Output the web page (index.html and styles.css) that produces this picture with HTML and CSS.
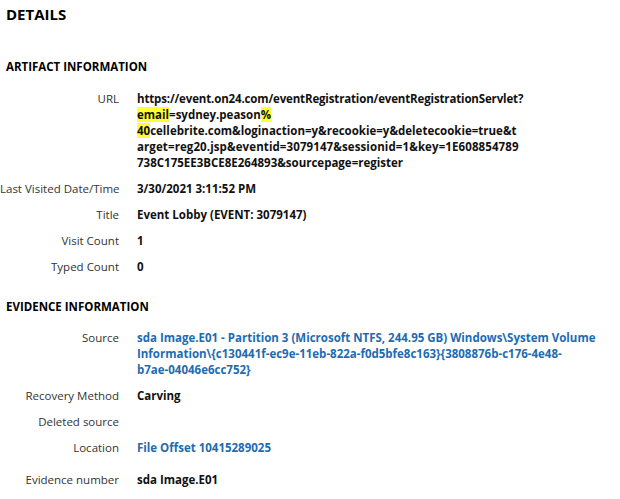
FILE: index.html
```html
<!DOCTYPE html>
<html>
<head>
<meta charset="utf-8">
<link rel="stylesheet" href="styles.css">
</head>
<body>
<div class="page">
  <h1 class="title">DETAILS</h1>
  <h2 class="section">ARTIFACT INFORMATION</h2>
  <div class="rows">
    <div class="row"><div class="label">URL</div><div class="value"><span class="tight">https://event.on24.com/eventRegistration/eventRegistrationServlet?</span><br><span class="hl">email</span>=sydney.peason<span class="hl">%</span><br><span class="hl">40</span>cellebrite.com&amp;loginaction=y&amp;recookie=y&amp;deletecookie=true&amp;t<br><span class="wide">arget=reg20.jsp&amp;eventid=3079147&amp;sessionid=1&amp;key=1E608854789</span><br>738C175EE3BCE8E264893&amp;sourcepage=register</div></div>
    <div class="row"><div class="label">Last Visited Date/Time</div><div class="value">3/30/2021 3:11:52 PM</div></div>
    <div class="row"><div class="label">Title</div><div class="value">Event Lobby (EVENT: 3079147)</div></div>
    <div class="row"><div class="label">Visit Count</div><div class="value">1</div></div>
    <div class="row"><div class="label">Typed Count</div><div class="value">0</div></div>
  </div>
  <h2 class="section section-second">EVIDENCE INFORMATION</h2>
  <div class="rows rows-second">
    <div class="row"><div class="label">Source</div><div class="value link">sda Image.E01 - Partition 3 (Microsoft NTFS, 244.95 GB) Windows\System Volume<br>Information\{c130441f-ec9e-11eb-822a-f0d5bfe8c163}{3808876b-c176-4e48-<br>b7ae-04046e6cc752}</div></div>
    <div class="row"><div class="label">Recovery Method</div><div class="value">Carving</div></div>
    <div class="row"><div class="label">Deleted source</div><div class="value"></div></div>
    <div class="row"><div class="label">Location</div><div class="value link">File Offset 10415289025</div></div>
    <div class="row row-gap"><div class="label">Evidence number</div><div class="value">sda Image.E01</div></div>
  </div>
</div>
</body>
</html>
```

FILE: styles.css
```css
html, body {
  margin: 0;
  padding: 0;
  background: #ffffff;
}
body {
  font-family: "Open Sans", "Noto Sans", "Liberation Sans", sans-serif;
  color: #000;
}
.page {
  padding-top: 4px;
}
.title {
  margin: 0;
  padding-left: 6px;
  font-size: 15px;
  line-height: 20px;
  font-weight: 700;
}
.section {
  margin: 35px 0 0 0;
  padding-left: 6px;
  font-size: 11.5px;
  line-height: 16px;
  font-weight: 700;
}
.section-second {
  margin-top: 24px;
}
.rows {
  display: flex;
  flex-direction: column;
  gap: 10px;
  margin-top: 16px;
}
.rows-second {
  margin-top: 15px;
}
.row {
  display: grid;
  grid-template-columns: 119px 1fr;
  column-gap: 18px;
  font-size: 11.5px;
  line-height: 16px;
  min-height: 16px;
}
.row-gap {
  margin-top: 6px;
}
.label {
  text-align: right;
  color: #333;
  white-space: nowrap;
}
.value {
  font-weight: 700;
  color: #111;
}
.tight {
  letter-spacing: -0.15px;
}
.wide {
  letter-spacing: 0.1px;
}
.link {
  color: #1e6bb0;
}
.hl {
  background: #ffff33;
}
```
